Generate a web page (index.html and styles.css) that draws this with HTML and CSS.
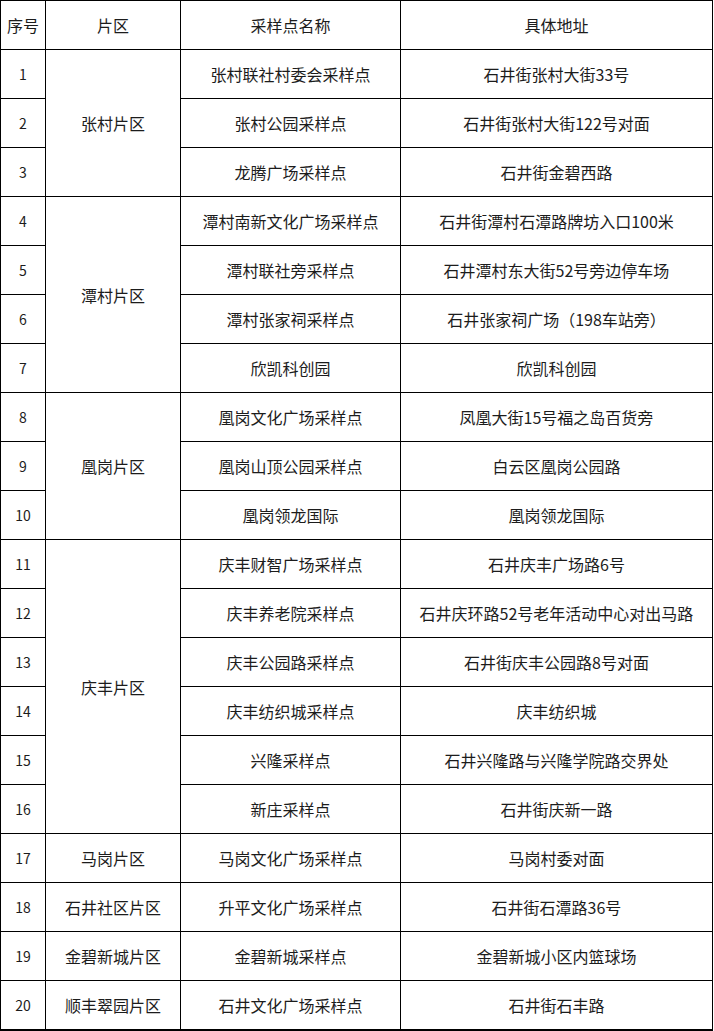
FILE: index.html
```html
<!DOCTYPE html>
<html lang="zh-CN">
<head>
<meta charset="utf-8">
<title>采样点</title>
<link rel="stylesheet" href="styles.css">
</head>
<body>
<table class="sites">
<colgroup>
<col class="c-no"><col class="c-area"><col class="c-name"><col class="c-addr">
</colgroup>
<thead>
<tr><th>序号</th><th>片区</th><th>采样点名称</th><th>具体地址</th></tr>
</thead>
<tbody>
<tr><td>1</td><td rowspan="3">张村片区</td><td>张村联社村委会采样点</td><td>石井街张村大街33号</td></tr>
<tr><td>2</td><td>张村公园采样点</td><td>石井街张村大街122号对面</td></tr>
<tr><td>3</td><td>龙腾广场采样点</td><td>石井街金碧西路</td></tr>
<tr><td>4</td><td rowspan="4">潭村片区</td><td>潭村南新文化广场采样点</td><td>石井街潭村石潭路牌坊入口100米</td></tr>
<tr><td>5</td><td>潭村联社旁采样点</td><td>石井潭村东大街52号旁边停车场</td></tr>
<tr><td>6</td><td>潭村张家祠采样点</td><td>石井张家祠广场（198车站旁）</td></tr>
<tr><td>7</td><td>欣凯科创园</td><td>欣凯科创园</td></tr>
<tr><td>8</td><td rowspan="3">凰岗片区</td><td>凰岗文化广场采样点</td><td>凤凰大街15号福之岛百货旁</td></tr>
<tr><td>9</td><td>凰岗山顶公园采样点</td><td>白云区凰岗公园路</td></tr>
<tr><td>10</td><td>凰岗领龙国际</td><td>凰岗领龙国际</td></tr>
<tr><td>11</td><td rowspan="6">庆丰片区</td><td>庆丰财智广场采样点</td><td>石井庆丰广场路6号</td></tr>
<tr><td>12</td><td>庆丰养老院采样点</td><td>石井庆环路52号老年活动中心对出马路</td></tr>
<tr><td>13</td><td>庆丰公园路采样点</td><td>石井街庆丰公园路8号对面</td></tr>
<tr><td>14</td><td>庆丰纺织城采样点</td><td>庆丰纺织城</td></tr>
<tr><td>15</td><td>兴隆采样点</td><td>石井兴隆路与兴隆学院路交界处</td></tr>
<tr><td>16</td><td>新庄采样点</td><td>石井街庆新一路</td></tr>
<tr><td>17</td><td>马岗片区</td><td>马岗文化广场采样点</td><td>马岗村委对面</td></tr>
<tr><td>18</td><td>石井社区片区</td><td>升平文化广场采样点</td><td>石井街石潭路36号</td></tr>
<tr><td>19</td><td>金碧新城片区</td><td>金碧新城采样点</td><td>金碧新城小区内篮球场</td></tr>
<tr class="last"><td>20</td><td>顺丰翠园片区</td><td>石井文化广场采样点</td><td>石井街石丰路</td></tr>
</tbody>
</table>
</body>
</html>
```

FILE: styles.css
```css
html, body {
  margin: 0;
  padding: 0;
  background: #ffffff;
}

.sites {
  border-collapse: collapse;
  table-layout: fixed;
  width: 712px;
  font-family: "Noto Sans CJK SC", "Noto Sans", sans-serif;
  font-size: 16px;
  color: #1c1c1c;
}

.c-no { width: 45px; }
.c-area { width: 135px; }
.c-name { width: 220px; }
.c-addr { width: 312px; }

.sites th,
.sites td {
  border: 1px solid #000;
  height: 48px;
  padding: 0;
  text-align: center;
  vertical-align: middle;
  font-weight: normal;
  line-height: 20px;
  white-space: nowrap;
}

.sites td:first-child {
  font-size: 14px;
}

.sites tr.last td {
  border-bottom: 2px solid #000;
}
```
